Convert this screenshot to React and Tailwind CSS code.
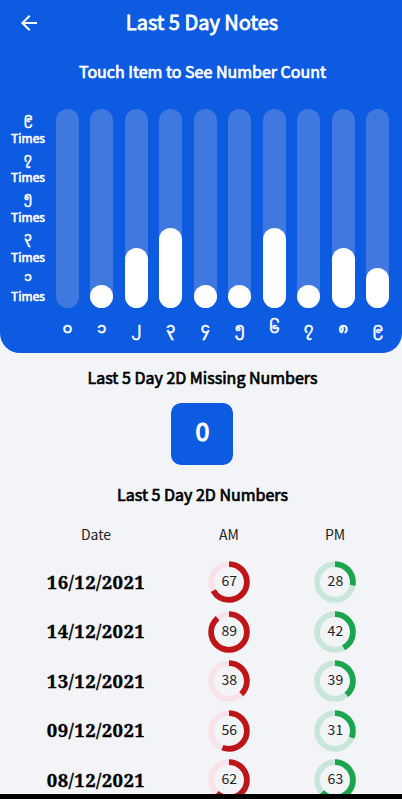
import { MdArrowBack } from 'react-icons/md';

const BARS = [
  { digit: '၀', count: 0 },
  { digit: '၁', count: 1 },
  { digit: '၂', count: 3 },
  { digit: '၃', count: 4 },
  { digit: '၄', count: 1 },
  { digit: '၅', count: 1 },
  { digit: '၆', count: 4 },
  { digit: '၇', count: 1 },
  { digit: '၈', count: 3 },
  { digit: '၉', count: 2 },
];

const TICKS = ['၉', '၇', '၅', '၃', '၁'];

const ROWS = [
  { date: '16/12/2021', am: 67, pm: 28 },
  { date: '14/12/2021', am: 89, pm: 42 },
  { date: '13/12/2021', am: 38, pm: 39 },
  { date: '09/12/2021', am: 56, pm: 31 },
  { date: '08/12/2021', am: 62, pm: 63 },
];

function Ring({ value, color, track }) {
  return (
    <div className="relative flex h-[42px] w-[42px] items-center justify-center">
      <svg viewBox="0 0 42 42" className="absolute inset-0 h-full w-full -rotate-90" fill="none" strokeWidth="5.8">
        <circle cx="21" cy="21" r="17.9" stroke={track} />
        <circle cx="21" cy="21" r="17.9" stroke={color} pathLength="100" strokeDasharray={`${value} 100`} />
      </svg>
      <span className="relative -mt-[4px] text-[14px] leading-none text-[#222]">{value}</span>
    </div>
  );
}

export default function App() {
  return (
    <div className="flex h-[799px] w-[402px] flex-col overflow-hidden bg-[#f3f4f8] font-['Noto_Sans_CJK_SC','Noto_Sans_Myanmar',sans-serif] text-black">
      <div className="h-[353px] shrink-0 rounded-b-[20px] bg-[#0d5be1] text-white">
        {/* Header */}
        <div className="grid h-[44px] grid-cols-[58px_1fr_58px] items-center">
          <button className="flex justify-center pt-[2px]">
            <MdArrowBack className="h-[24px] w-[24px]" />
          </button>
          <h1 className="whitespace-nowrap pb-px pl-[2px] text-center text-[20px] leading-none [-webkit-text-stroke:0.8px]">Last 5 Day Notes</h1>
        </div>
        <p className="mt-[18px] pl-[3px] text-center text-[16px] leading-[18px] [-webkit-text-stroke:0.7px]">Touch Item to See Number Count</p>

        {/* Chart */}
        <div className="mt-[29px] flex">
          <div className="flex w-[56px] flex-col text-center [-webkit-text-stroke:0.6px]">
            {TICKS.map(t => (
              <div key={t} className="h-[39.7px]">
                <div className="h-[20.5px] text-[12px] leading-[16px]">{t}</div>
                <div className="text-[12px] leading-[16px]">Times</div>
              </div>
            ))}
          </div>
          <div className="flex gap-[11.7px]">
            {BARS.map(({ digit, count }) => (
              <div key={digit} className="flex w-[22.8px] flex-col items-center">
                <div className="flex h-[199px] w-full flex-col justify-end rounded-full bg-[#3f78df]">
                  {count > 0 && (
                    <div className="min-h-[23px] rounded-full bg-white" style={{ height: `${count * 10}%` }} />
                  )}
                </div>
                <span className="mt-[8.5px] text-[14.5px] leading-[20px] [-webkit-text-stroke:0.6px]">{digit}</span>
              </div>
            ))}
          </div>
        </div>
      </div>

      {/* Missing numbers */}
      <h2 className="mt-[14px] pl-[3px] text-center text-[16px] leading-[20px] [-webkit-text-stroke:0.7px]">Last 5 Day 2D Missing Numbers</h2>
      <div className="mt-[16px] ml-[171.4px] flex h-[62px] w-[62px] shrink-0 items-center justify-center rounded-[10px] bg-[#0d5be1] pb-[8px] text-[25px] leading-none text-white [-webkit-text-stroke:1.1px]">
        0
      </div>

      {/* Daily numbers */}
      <h2 className="mt-[19px] pl-[3px] text-center text-[16px] leading-[20px] [-webkit-text-stroke:0.7px]">Last 5 Day 2D Numbers</h2>
      <div className="mt-[20px] grid grid-cols-[144px_106px_106px] justify-start gap-x-0 pl-6 text-center text-[14px] leading-[20px] text-[#222]">
        <span>Date</span>
        <span className="pl-[16px]">AM</span>
        <span className="pl-[16px]">PM</span>
      </div>
      <div className="mt-[13.4px] min-h-0 flex-1 overflow-hidden">
        {ROWS.map(({ date, am, pm }) => (
          <div key={date} className="grid h-[49.5px] grid-cols-[176px_106.4px_106px] items-center justify-items-center">
            <span className="pl-[16px] font-['Noto_Serif','DejaVu_Serif_Condensed',serif] text-[18.5px] font-bold leading-none tracking-[0.4px] [-webkit-text-stroke:0.3px]">{date}</span>
            <Ring value={am} color="#be1618" track="#f7e3e8" />
            <Ring value={pm} color="#1ba54d" track="#c8e6d9" />
          </div>
        ))}
      </div>
      <div className="h-[5px] shrink-0 bg-black" />
    </div>
  );
}
